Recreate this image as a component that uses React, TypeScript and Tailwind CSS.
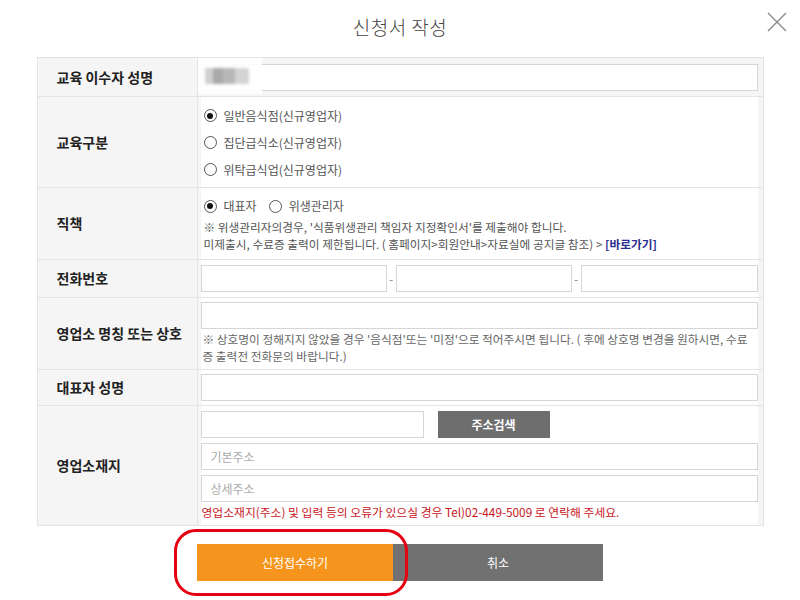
import React from "react";

const font = { fontFamily: '"Noto Sans CJK KR", "Noto Sans", sans-serif' };

function Radio({ checked, label }: { checked?: boolean; label: string }) {
  return (
    <span className="inline-flex items-center gap-[7px]">
      <span className="w-[13px] h-[13px] rounded-full border border-[#555] bg-white flex items-center justify-center">
        {checked && <span className="w-[6px] h-[6px] rounded-full bg-[#111]" />}
      </span>
      <span>{label}</span>
    </span>
  );
}

function Input({ className = "", placeholder }: { className?: string; placeholder?: string }) {
  return (
    <div className={`h-[27px] border border-[#d6d6d6] bg-white flex items-center px-[9px] text-[12px] text-[#aaa] ${className}`}>
      {placeholder}
    </div>
  );
}

function Row({ label, h, children, last }: { label: string; h: string; children: React.ReactNode; last?: boolean }) {
  return (
    <div className={`flex ${h} ${last ? "" : "border-b border-[#e4e4e4]"}`}>
      <div className="w-[160px] shrink-0 bg-[#f5f5f5] border-r border-[#e4e4e4] flex items-center pl-[19px] text-[14px] font-bold text-[#222] whitespace-nowrap">
        {label}
      </div>
      <div className="flex-1 pl-[3px] pr-[5px]">{children}</div>
    </div>
  );
}

export default function App() {
  return (
    <div className="w-[800px] h-[600px] bg-white relative text-[#555]" style={font}>
      <div className="h-[57px] flex items-center justify-center pb-[2px]">
        <span className="text-[19px] text-[#444] font-light tracking-[0.5px]">신청서 작성</span>
      </div>
      <svg className="absolute left-[767px] top-[12px]" width="20" height="20" viewBox="0 0 20 20">
        <path d="M1 1 L19 19 M19 1 L1 19" stroke="#8a8a8a" strokeWidth="1.4" fill="none" />
      </svg>

      <div className="mx-auto w-[727px] border border-[#e4e4e4] bg-[#f5f5f5]">
        <Row label="교육 이수자 성명" h="h-[39px]">
          <div className="relative h-full flex items-center">
            <Input className="w-full" />
            <div className="absolute left-[-3px] top-0 w-[64px] h-[36px] bg-white/90 flex items-center pl-[7px]">
              <div className="flex h-[16px] blur-[1.5px]">
                <div className="w-[8px] bg-[#d0d0d0]" />
                <div className="w-[10px] bg-[#a9a9a9]" />
                <div className="w-[12px] bg-[#b8b8b8]" />
                <div className="w-[14px] bg-[#d4d4d4]" />
              </div>
            </div>
          </div>
        </Row>
        <Row label="교육구분" h="h-[91px]">
          <div className="bg-white h-full flex flex-col pt-[5px] text-[12px] pl-[3px]">
            <div className="h-[27px] flex items-center"><Radio checked label="일반음식점(신규영업자)" /></div>
            <div className="h-[27px] flex items-center"><Radio label="집단급식소(신규영업자)" /></div>
            <div className="h-[27px] flex items-center"><Radio label="위탁급식업(신규영업자)" /></div>
          </div>
        </Row>
        <Row label="직책" h="h-[72px]">
          <div className="bg-white h-full flex flex-col pt-[8px] pl-[3px]">
            <div className="h-[20px] flex items-center gap-[12px] text-[12px]">
              <Radio checked label="대표자" />
              <Radio label="위생관리자" />
            </div>
            <div className="text-[11.7px] leading-[17px] mt-[2px] text-[#555]">
              <div>※ 위생관리자의경우, '식품위생관리 책임자 지정확인서'를 제출해야 합니다.</div>
              <div>
                미제출시, 수료증 출력이 제한됩니다. ( 홈페이지&gt;회원안내&gt;자료실에 공지글 참조) &gt;{" "}
                <span className="text-[#2b2e8f] font-bold">[바로가기]</span>
              </div>
            </div>
          </div>
        </Row>
        <Row label="전화번호" h="h-[38px]">
          <div className="bg-white h-full flex items-center text-[12px] text-[#888]">
            <Input className="w-[186px]" />
            <span className="w-[9px] text-center">-</span>
            <Input className="w-[176px]" />
            <span className="w-[9px] text-center">-</span>
            <Input className="flex-1" />
          </div>
        </Row>
        <Row label="영업소 명칭 또는 상호" h="h-[72px]">
          <div className="bg-white h-full flex flex-col pt-[4px]">
            <Input className="w-full" />
            <div className="text-[11.7px] leading-[17px] mt-[1px] pl-[2px] pr-[2px] text-[#666]">
              ※ 상호명이 정해지지 않았을 경우 '음식점'또는 '미정'으로 적어주시면 됩니다. ( 후에 상호명 변경을 원하시면, 수료증 출력전 전화문의 바랍니다.)
            </div>
          </div>
        </Row>
        <Row label="대표자 성명" h="h-[36px]">
          <div className="bg-white h-full flex items-center">
            <Input className="w-full" />
          </div>
        </Row>
        <Row label="영업소재지" h="h-[119px]" last>
          <div className="bg-white h-full flex flex-col pt-[5px] gap-[5px]">
            <div className="flex gap-[14px]">
              <Input className="w-[223px]" />
              <div className="w-[112px] h-[27px] bg-[#6e6e6e] text-white text-[12px] font-bold flex items-center justify-center">
                주소검색
              </div>
            </div>
            <Input className="w-full" placeholder="기본주소" />
            <Input className="w-full" placeholder="상세주소" />
            <div className="text-[11.8px] text-[#c8161d] leading-[14px] -mt-[2px] pl-[1px]">
              영업소재지(주소) 및 입력 등의 오류가 있으실 경우 Tel)02-449-5009 로 연락해 주세요.
            </div>
          </div>
        </Row>
      </div>

      <div className="flex justify-center mt-[18px]">
        <div className="w-[196px] h-[37px] bg-[#f5951d] text-white text-[12px] flex items-center justify-center">
          신청접수하기
        </div>
        <div className="w-[210px] h-[37px] bg-[#717171] text-white text-[12px] flex items-center justify-center">
          취소
        </div>
      </div>
      <div className="absolute left-[174px] top-[529px] w-[234px] h-[67px] border-[3px] border-[#e60012] rounded-[22px]" />
    </div>
  );
}
